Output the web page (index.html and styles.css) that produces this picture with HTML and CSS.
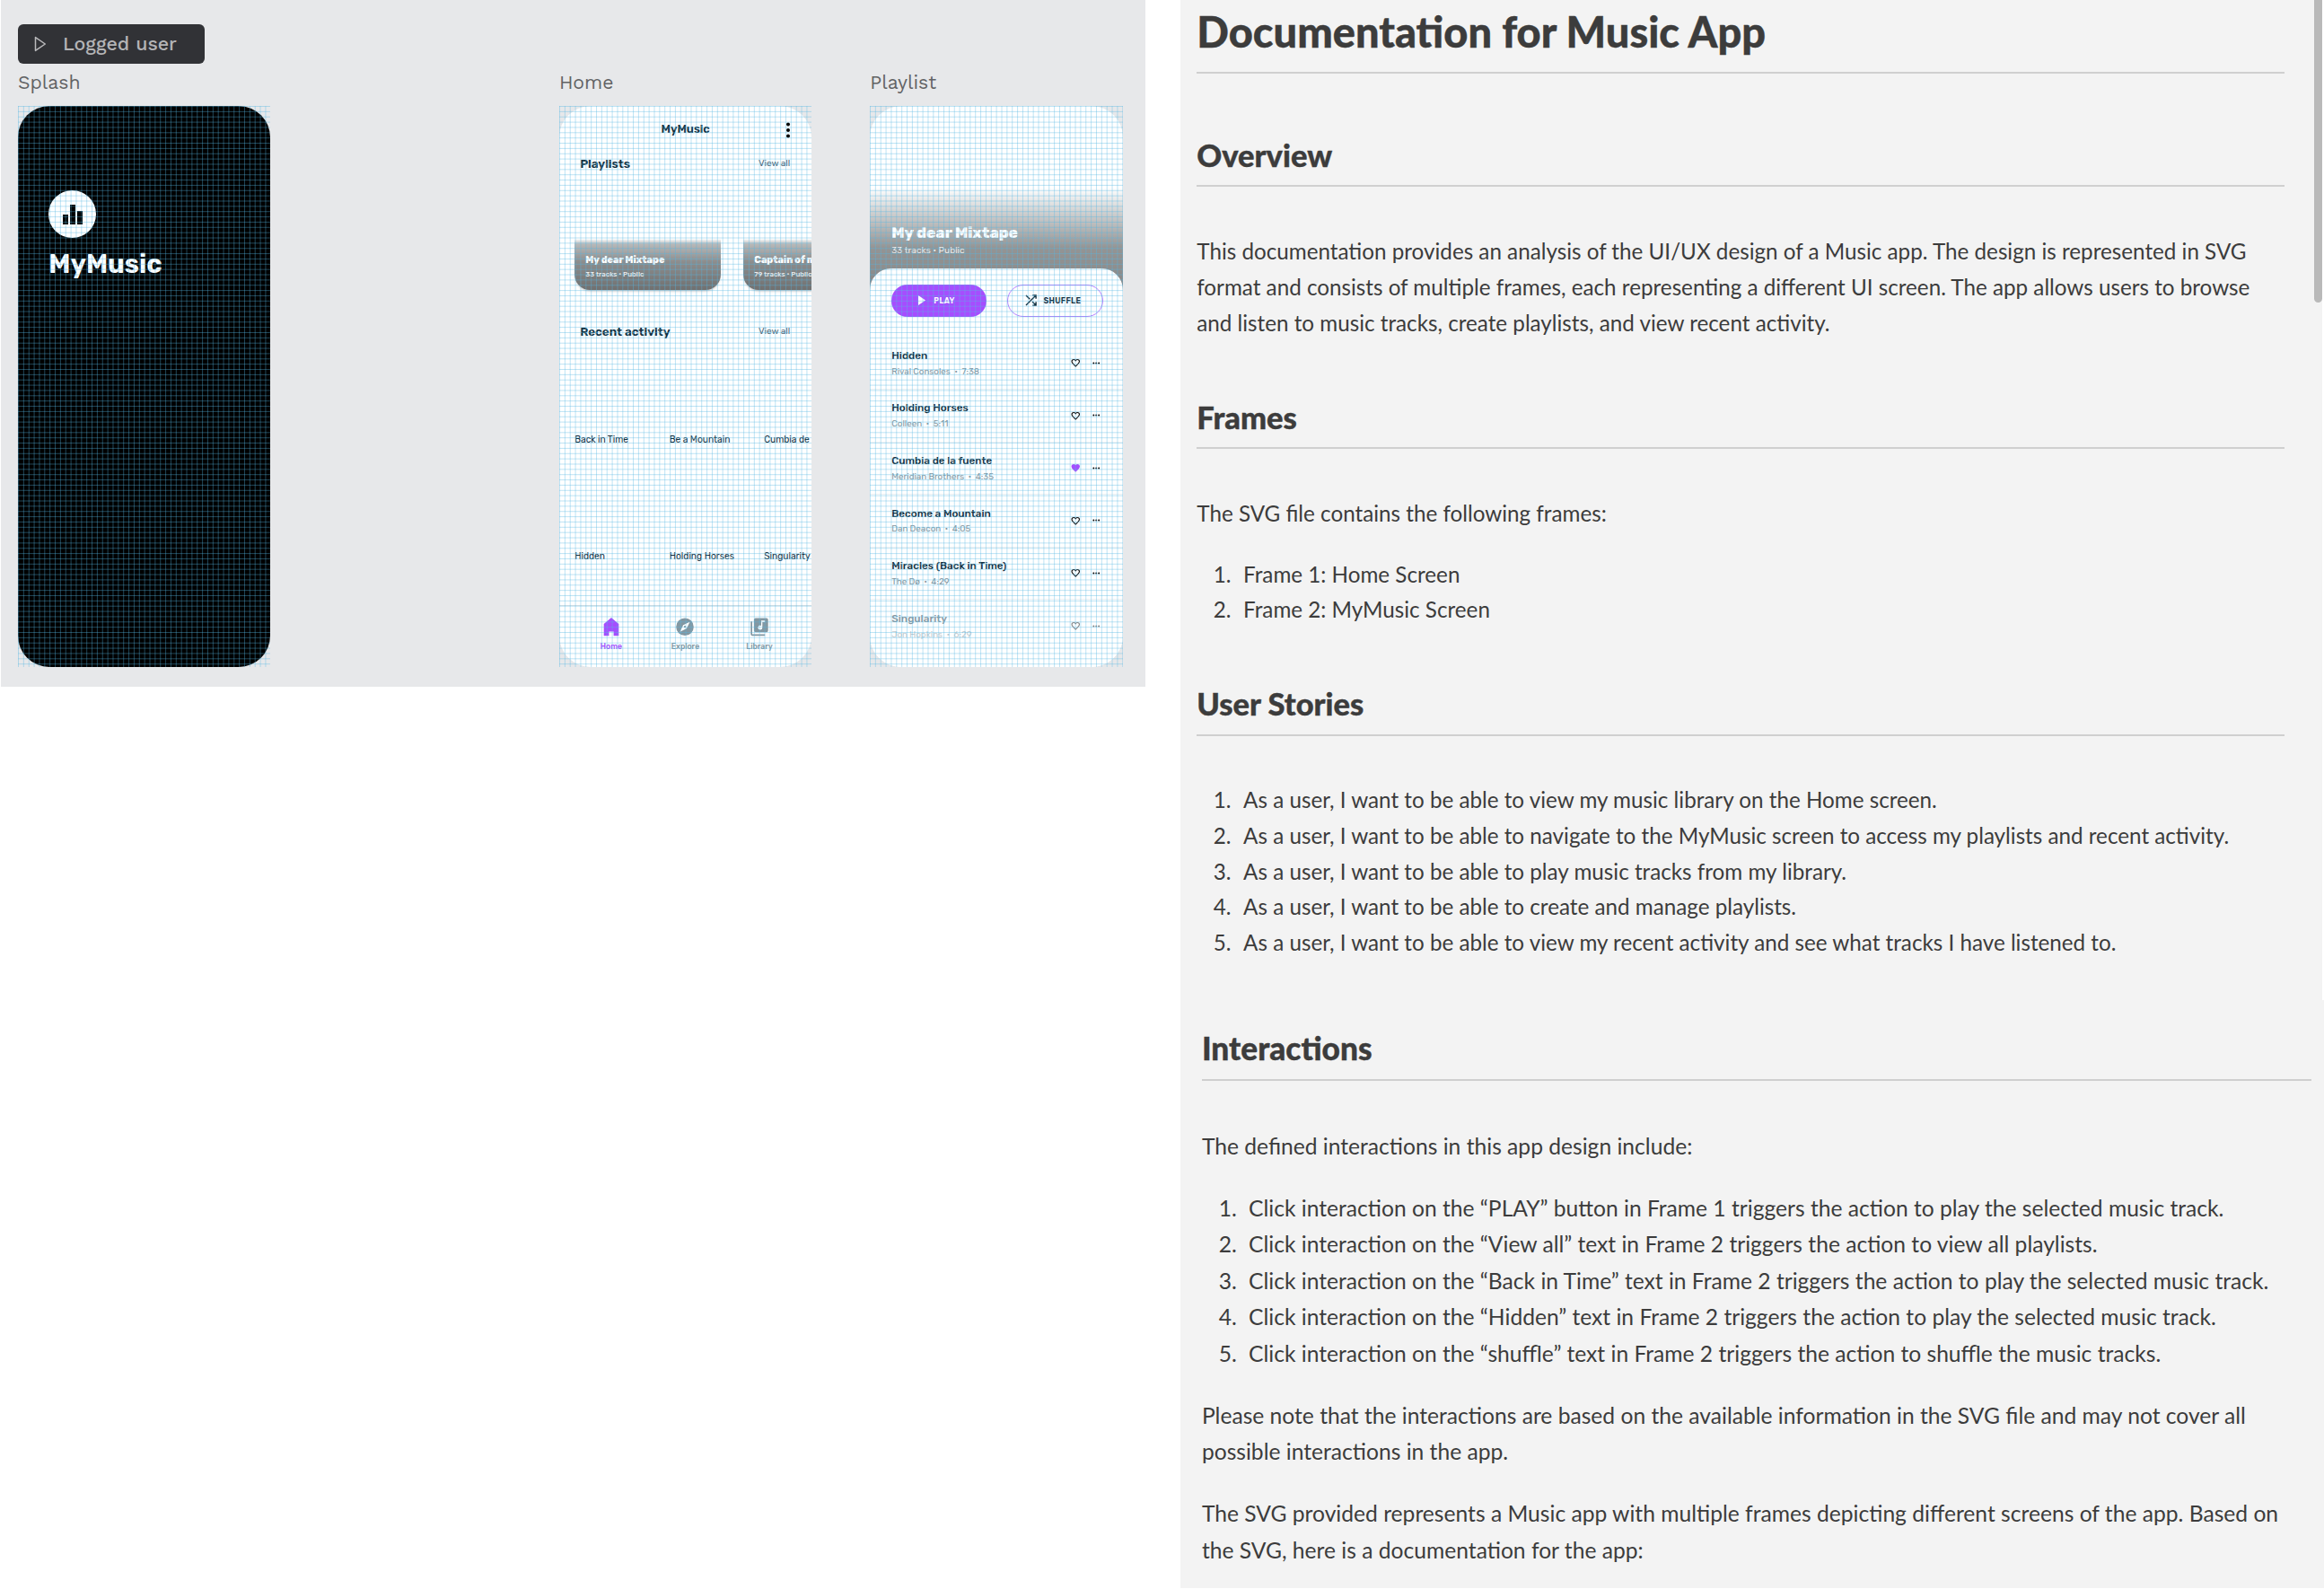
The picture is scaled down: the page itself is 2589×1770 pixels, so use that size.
FILE: index.html
```
<!DOCTYPE html>
<html lang="en">
<head>
<meta charset="utf-8">
<title>Music App</title>
<link rel="stylesheet" href="styles.css">
</head>
<body>
<svg class="defs" width="0" height="0">
  <symbol id="heart" viewBox="0 0 24 24"><path fill="none" stroke="currentColor" stroke-width="2.6" d="M12 20.6C5.4 15 2.4 12.200 2.400 8.200 2.400 5.200 4.700 3.400 7.200 3.400c2 0 3.700 1 4.800 2.800 1.100-1.800 2.800-2.800 4.800-2.800 2.500 0 4.800 1.800 4.800 4.800C21.600 12.200 18.600 15 12 20.600z"/></symbol>
  <symbol id="heart-full" viewBox="0 0 24 24"><path fill="currentColor" d="M12 22C4.500 15.600 1.200 12.600 1.200 8.200 1.200 4.600 4 2.200 7.200 2.200c1.900 0 3.700.9 4.800 2.400 1.100-1.500 2.900-2.400 4.800-2.400 3.200 0 6 2.400 6 6C22.800 12.600 19.500 15.600 12 22z"/></symbol>
  <symbol id="dots" viewBox="0 0 8 3"><circle cx="1.100" cy="1.500" r=".95"/><circle cx="4" cy="1.500" r=".95"/><circle cx="6.900" cy="1.500" r=".95"/></symbol>
</svg>
<main class="page">
  <section class="board">
    <div class="flow"><svg width="14" height="18" viewBox="0 0 14 18"><path d="M1.500 1.600 12.300 9 1.500 16.400z" fill="none" stroke="#bababc" stroke-width="1.500" stroke-linejoin="round"/></svg><span>Logged user</span></div>
    <div class="frames">
      <div class="frame-col">
        <div class="frame-label">Splash</div>
        <div class="frame">
          <div class="screen splash">
            <div class="logo"><svg width="22" height="22" viewBox="0 0 22 22"><path d="M0 11h6v11H0zM8 0h6v22H8zM16 7h6v15h-6z" fill="#000"/></svg></div>
            <div class="brand">MyMusic</div>
          </div>
        </div>
      </div>
      <div class="frame-col home-col">
        <div class="frame-label">Home</div>
        <div class="frame">
          <div class="screen home">
            <header class="bar"><span class="bar-title">MyMusic</span><svg class="kebab" width="6" height="18" viewBox="0 0 6 18"><circle cx="3" cy="2.600" r="2"/><circle cx="3" cy="9" r="2"/><circle cx="3" cy="15.400" r="2"/></svg></header>
            <div class="head"><h3>Playlists</h3><span>View all</span></div>
            <div class="cards">
              <div class="card"><b>My dear Mixtape</b><span>33 tracks • Public</span></div>
              <div class="card"><b>Captain of my</b><span>79 tracks • Public</span></div>
            </div>
            <div class="head recent"><h3>Recent activity</h3><span>View all</span></div>
            <div class="covers"><span>Back in Time</span><span>Be a Mountain</span><span>Cumbia de</span></div>
            <div class="covers second"><span>Hidden</span><span>Holding Horses</span><span>Singularity</span></div>
            <nav class="tabs">
              <div class="tab active"><svg width="18" height="21" viewBox="0 0 18 21"><path d="M9 0 17.300 7V20.300H11.600V15.600H6.400V20.300H.7V7z"/></svg><span>Home</span></div>
              <div class="tab"><svg width="20" height="21" viewBox="0 0 20 21"><path fill-rule="evenodd" d="M10 .4a9.800 9.800 0 1 0 0 19.600A9.800 9.800 0 0 0 10 .4zM15.500 4.700 11.900 12.100 4.500 15.700 8.100 8.300zM10 9.100a1.100 1.100 0 1 0 0 2.200 1.100 1.100 0 0 0 0-2.200z"/></svg><span>Explore</span></div>
              <div class="tab"><svg width="20" height="21" viewBox="0 0 20 21"><path d="M.3 4.300H2v14.200h14.200v1.700H2.200a1.900 1.900 0 0 1-1.900-1.900z"/><path fill-rule="evenodd" d="M5.800.4h12a1.900 1.900 0 0 1 1.900 1.900v12a1.900 1.900 0 0 1-1.900 1.900h-12a1.900 1.900 0 0 1-1.900-1.900v-12A1.900 1.900 0 0 1 5.800.4zM12 3.300v5.600a2.400 2.400 0 1 0 1.300 2.100V5h2.900V3.300z"/></svg><span>Library</span></div>
            </nav>
          </div>
        </div>
      </div>
      <div class="frame-col list-col">
        <div class="frame-label">Playlist</div>
        <div class="frame">
          <div class="screen playlist">
            <div class="hero"><h2>My dear Mixtape</h2><span>33 tracks • Public</span></div>
            <div class="sheet">
              <div class="actions">
                <div class="btn play"><svg width="8" height="11" viewBox="0 0 8 11"><path d="M0 0 8 5.500 0 11z" fill="#fff"/></svg><span>PLAY</span></div>
                <div class="btn shuffle"><svg width="13" height="13" viewBox="0 0 13 13"><g fill="none" stroke="#12303f" stroke-width="1.400"><path d="M1 1 5.300 5.300M1 12 11.500 1.500M8 8l3.500 3.500M8.300.9h3.800v3.800M8.300 12.100h3.800V8.300"/></g></svg><span>SHUFFLE</span></div>
              </div>
              <div class="row"><div class="song"><b>Hidden</b><span>Rival Consoles&nbsp; • &nbsp;7:38</span></div><svg class="heart"><use href="#heart"/></svg><svg class="dots"><use href="#dots"/></svg></div>
              <div class="row"><div class="song"><b>Holding Horses</b><span>Colleen&nbsp; • &nbsp;5:11</span></div><svg class="heart"><use href="#heart"/></svg><svg class="dots"><use href="#dots"/></svg></div>
              <div class="row"><div class="song"><b>Cumbia de la fuente</b><span>Meridian Brothers&nbsp; • &nbsp;4:35</span></div><svg class="heart liked"><use href="#heart-full"/></svg><svg class="dots"><use href="#dots"/></svg></div>
              <div class="row"><div class="song"><b>Become a Mountain</b><span>Dan Deacon&nbsp; • &nbsp;4:05</span></div><svg class="heart"><use href="#heart"/></svg><svg class="dots"><use href="#dots"/></svg></div>
              <div class="row"><div class="song"><b>Miracles (Back in Time)</b><span>The Dø&nbsp; • &nbsp;4:29</span></div><svg class="heart"><use href="#heart"/></svg><svg class="dots"><use href="#dots"/></svg></div>
              <div class="row faded"><div class="song"><b>Singularity</b><span>Jon Hopkins&nbsp; • &nbsp;6:29</span></div><svg class="heart"><use href="#heart"/></svg><svg class="dots"><use href="#dots"/></svg></div>
            </div>
          </div>
        </div>
      </div>
    </div>
  </section>
  <article class="docs">
    <section class="doc upper">
      <h1>Documentation for Music App</h1>
      <h2 class="first">Overview</h2>
      <p>This documentation provides an analysis of the UI/UX design of a Music app. The design is represented in SVG<br>format and consists of multiple frames, each representing a different UI screen. The app allows users to browse<br>and listen to music tracks, create playlists, and view recent activity.</p>
      <h2>Frames</h2>
      <p>The SVG file contains the following frames:</p>
      <ol>
        <li>Frame 1: Home Screen</li>
        <li>Frame 2: MyMusic Screen</li>
      </ol>
      <h2>User Stories</h2>
      <ol class="lead">
        <li>As a user, I want to be able to view my music library on the Home screen.</li>
        <li>As a user, I want to be able to navigate to the MyMusic screen to access my playlists and recent activity.</li>
        <li>As a user, I want to be able to play music tracks from my library.</li>
        <li>As a user, I want to be able to create and manage playlists.</li>
        <li>As a user, I want to be able to view my recent activity and see what tracks I have listened to.</li>
      </ol>
      <div class="thumb"></div>
    </section>
    <section class="doc lower">
      <h2>Interactions</h2>
      <p>The defined interactions in this app design include:</p>
      <ol>
        <li>Click interaction on the “PLAY” button in Frame 1 triggers the action to play the selected music track.</li>
        <li>Click interaction on the “View all” text in Frame 2 triggers the action to view all playlists.</li>
        <li>Click interaction on the “Back in Time” text in Frame 2 triggers the action to play the selected music track.</li>
        <li>Click interaction on the “Hidden” text in Frame 2 triggers the action to play the selected music track.</li>
        <li>Click interaction on the “shuffle” text in Frame 2 triggers the action to shuffle the music tracks.</li>
      </ol>
      <p class="next">Please note that the interactions are based on the available information in the SVG file and may not cover all<br>possible interactions in the app.</p>
      <p class="next">The SVG provided represents a Music app with multiple frames depicting different screens of the app. Based on<br>the SVG, here is a documentation for the app:</p>
    </section>
  </article>
</main>
</body>
</html>
```
FILE: styles.css
```
* { box-sizing: border-box; }
body { margin: 0; background: #fff; font-family: Rubik, Roboto, sans-serif; }
h1, h2, h3, p, ol { margin: 0; padding: 0; }
.defs { position: absolute; }
.page { display: flex; height: 1770px; width: 2589px; overflow: hidden; }

/* design board */
.board { margin-left: 1px; width: 1274.700px; height: 764.500px; padding: 27px 0 0 19px; background: #e7e8ea; font-family: "Work Sans", "Noto Sans", sans-serif; font-weight: 500; flex: none; }
.flow { display: flex; align-items: center; gap: 18px; width: 208px; height: 43.500px; padding-left: 18px; border-radius: 6px; background: #313236; color: #b4b4b6; font-size: 21.400px; white-space: nowrap; }
.frames { display: flex; }
.frame-label { height: 47.500px; padding-top: 9.800px; font-size: 21.200px; line-height: 24px; font-weight: 450; color: #626365; }
.home-col { margin-left: 321.700px; }
.list-col { margin-left: 65px; }
.frame { position: relative; width: 281.300px; height: 625.300px; font-family: Rubik, Roboto, sans-serif; font-weight: 400; color: #12303f; }
.frame::after { content: ""; position: absolute; inset: 0; background:
  repeating-linear-gradient(90deg, rgba(84,182,226,.38) .5px, rgba(84,182,226,0) 1.500px, rgba(84,182,226,0) 5.360px, rgba(84,182,226,.38) 6.360px),
  repeating-linear-gradient(180deg, rgba(84,182,226,.38) .5px, rgba(84,182,226,0) 1.500px, rgba(84,182,226,0) 5.360px, rgba(84,182,226,.38) 6.360px); }
.screen { height: 100%; border-radius: 35px; background: #fff; overflow: hidden; white-space: nowrap; display: flex; flex-direction: column; }

.splash { background: #000; padding: 94px 0 0 34.300px; }
.logo { width: 53px; height: 53px; border-radius: 50%; background: #fff; display: flex; align-items: center; justify-content: center; }
.brand { margin-top: 11.300px; color: #fff; font-weight: 700; font-size: 29.200px; line-height: 36px; }

.bar { display: flex; justify-content: center; padding-top: 16px; height: 53.800px; position: relative; }
.bar-title { font-size: 12.750px; line-height: 20px; font-weight: 600; }
.kebab { position: absolute; left: 251.800px; top: 17.500px; }
.head { display: flex; align-items: center; justify-content: space-between; height: 20px; padding: 0 24px 0 23.200px; }
.head h3 { font-size: 13.400px; line-height: 20px; font-weight: 600; }
.head span { font-size: 10.100px; line-height: 20px; color: #4d6777; }
.recent { margin-top: 36.100px; }
.cards { display: flex; gap: 24.800px; padding-left: 17.300px; margin-top: 74.200px; }
.card { flex: none; width: 163.200px; height: 57px; padding: 16.600px 0 0 12px; border-radius: 0 0 17px 17px; background: linear-gradient(rgba(0,0,0,0) 0, rgba(0,0,0,.28) 6px, rgba(0,0,0,.45) 26px, rgba(0,0,0,.56) 57px); box-shadow: 0 3px 3px -2px rgba(0,0,0,.3); color: #fff; display: flex; flex-direction: column; gap: 1.800px; }
.card b { font-size: 10.650px; line-height: 16px; font-weight: 800; }
.card span { font-size: 7.800px; line-height: 12px; font-weight: 500; color: #eee; }
.covers { display: flex; margin-top: 101.100px; padding-left: 17.200px; font-size: 10.220px; line-height: 20px; }
.covers span { flex: none; width: 105.500px; }
.second { margin-top: 109.700px; }
.tabs { display: flex; margin-top: 44.100px; border-top: 1px solid #d9dfe3; padding: 13px 17px 0 16.600px; height: 70px; }
.tab { flex: 1; display: flex; flex-direction: column; align-items: center; gap: 5.500px; color: #8497a1; fill: #8497a1; }
.tab span { font-size: 8.650px; line-height: 12px; font-weight: 500; }
.tab.active { color: #a64dff; fill: #a64dff; }

.hero { flex: none; height: 205px; padding: 128.800px 0 0 24px; color: #fff; background: linear-gradient(rgba(0,0,0,0) 91px, rgba(0,0,0,.2) 121px, rgba(0,0,0,.42) 158px, rgba(0,0,0,.47) 205px); display: flex; flex-direction: column; gap: 1.100px; }
.hero h2 { font-size: 17px; line-height: 24px; font-weight: 800; }
.hero span { font-size: 10.100px; line-height: 14px; color: #ececec; }
.sheet { flex: 1; margin-top: -23.700px; padding-top: 17.400px; border-radius: 24px 24px 0 0; background: #fff; }
.actions { display: flex; gap: 23px; padding-left: 23.300px; margin-bottom: 22.700px; }
.btn { display: flex; align-items: center; width: 106.500px; height: 36px; border-radius: 18px; font-size: 8.800px; letter-spacing: .25px; font-weight: 600; }
.play { background: #a64dff; color: #fff; gap: 9.700px; padding-left: 30px; }
.shuffle { border: 1px solid #b880ff; gap: 7.500px; padding-left: 19px; }
.row { display: flex; align-items: center; height: 58.600px; padding: 0 24px; border-bottom: 1px solid #eef1f3; }
.row:last-child { border: 0; opacity: .5; }
.song { flex: 1; display: flex; flex-direction: column; gap: 2.900px; }
.song b { font-size: 11.700px; line-height: 16px; font-weight: 500; }
.song span { font-size: 9.800px; line-height: 14px; color: #8497a1; word-spacing: -.2px; }
.heart { width: 10.500px; height: 10.500px; color: #111; margin-right: 13.700px; }
.liked { color: #a64dff; }
.dots { width: 8.500px; height: 3px; margin-right: .8px; }

/* documentation */
.docs { margin-left: 39.300px; flex: 1; font-family: Lato, sans-serif; color: #3c3c3c; white-space: nowrap; }
.doc { background: #f3f3f3; position: relative; }
.upper { width: 1272.500px; height: 1114px; padding: 4.600px 42px 0 18.300px; font-size: 24.220px; line-height: 39.700px; }
.lower { height: 655px; padding: 33.700px 14.500px 0 23.900px; font-size: 24.640px; line-height: 40.550px; }
.doc h1, .doc h2 { font-weight: 900; -webkit-text-stroke: .4px #3c3c3c; border-bottom: 2px solid #cfcfcf; }
.doc h1 { font-size: 46.950px; line-height: 60px; height: 77.400px; }
.doc h2 { font-size: 34.500px; line-height: 40px; height: 55.600px; margin-top: 65.300px; }
.doc h2.first { margin-top: 70.700px; }
.doc.lower h2 { font-size: 35.300px; margin-top: 0; height: 56px; }
.doc p { margin-top: 52px; }
.lower p { margin-top: 52.900px; }
.doc ol { list-style: none; counter-reset: n; margin-top: 27.600px; padding-left: 18.500px; }
.doc ol.lead { margin-top: 51.500px; }
.lower ol { padding-left: 18.900px; margin-top: 28.600px; }
.doc li { counter-increment: n; }
.doc li::before { content: counter(n) "."; display: inline-block; width: 33.300px; }
.doc p.next { margin-top: 28.300px; }
.thumb { position: absolute; left: 1263px; top: 0; width: 9.500px; height: 337px; border-radius: 0 0 5px 5px; background: #b9b9b9; }
```
